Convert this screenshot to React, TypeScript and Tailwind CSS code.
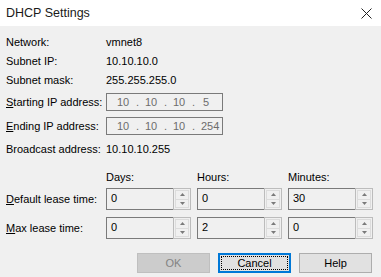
import React from "react";

function Row({ label, children }: { label: React.ReactNode; children: React.ReactNode }) {
  return (
    <div className="flex h-[19px] items-center">
      <div className="w-[100px] whitespace-nowrap">{label}</div>
      <div>{children}</div>
    </div>
  );
}

function IpBox({ parts }: { parts: string[] }) {
  return (
    <div className="flex h-[18px] w-[117px] items-center border border-[#7a7a7a] bg-[#f0f0f0] pl-[10px] text-[#6d6d6d]">
      <span className="w-[19px]">{parts[0]}</span>
      <span className="w-[9px]">.</span>
      <span className="w-[19px]">{parts[1]}</span>
      <span className="w-[9px]">.</span>
      <span className="w-[19px]">{parts[2]}</span>
      <span className="w-[9px]">{parts[3].length > 1 ? "." : ". "}</span>
      <span className={parts[3].length > 1 ? "" : "pl-[2px]"}>{parts[3]}</span>
    </div>
  );
}

function Spin({ value }: { value: string }) {
  return (
    <div className="flex h-[22px] w-[85px]">
      <div className="flex flex-1 items-center border border-r-0 border-[#7a7a7a] bg-[#f0f0f0] pl-[4px] pb-[2px]">
        {value}
      </div>
      <div className="flex w-[18px] flex-col border border-[#bcbcbc] bg-[#f0f0f0] p-px">
        <div className="flex flex-1 items-center justify-center border border-[#dcdcdc]">
          <svg width="5" height="3" viewBox="0 0 5 3">
            <path d="M2.5 0 L5 3 L0 3 Z" fill="#7a7a7a" />
          </svg>
        </div>
        <div className="flex flex-1 items-center justify-center border border-t-0 border-[#dcdcdc]">
          <svg width="5" height="3" viewBox="0 0 5 3">
            <path d="M0 0 L5 0 L2.5 3 Z" fill="#7a7a7a" />
          </svg>
        </div>
      </div>
    </div>
  );
}

export default function App() {
  return (
    <div
      className="h-[277px] w-[381px] overflow-hidden bg-[#f0f0f0] text-[11px] text-black"
      style={{ fontFamily: '"Liberation Sans", Arial, sans-serif' }}
    >
      <div className="flex h-[26px] items-center justify-between bg-white pl-[6px] pr-[9px]">
        <span className="text-[12.5px] text-[#1a1a1a]">DHCP Settings</span>
        <svg width="11" height="11" viewBox="0 0 11 11">
          <path d="M0.5 0.5 L10.5 10.5 M10.5 0.5 L0.5 10.5" stroke="#222" strokeWidth="1" />
        </svg>
      </div>

      <div className="pl-[6px] pt-[7px]">
        <Row label="Network:">vmnet8</Row>
        <Row label="Subnet IP:">10.10.10.0</Row>
        <Row label="Subnet mask:">255.255.255.0</Row>

        <div className="flex h-[24px] items-center">
          <div className="w-[100px] whitespace-nowrap">
            <span className="underline">S</span>tarting IP address:
          </div>
          <IpBox parts={["10", "10", "10", "5"]} />
        </div>
        <div className="flex h-[24px] items-center">
          <div className="w-[100px] whitespace-nowrap">
            <span className="underline">E</span>nding IP address:
          </div>
          <IpBox parts={["10", "10", "10", "254"]} />
        </div>
        <div className="flex h-[22px] items-center">
          <div className="w-[100px] whitespace-nowrap">Broadcast address:</div>
          <div>10.10.10.255</div>
        </div>

        <div className="mt-[8px] flex h-[18px] items-center">
          <div className="w-[100px]" />
          <div className="flex gap-[6px]">
            <div className="w-[85px]">Days:</div>
            <div className="w-[85px]">Hours:</div>
            <div className="w-[85px]">Minutes:</div>
          </div>
        </div>

        <div className="mt-[2px] flex items-center">
          <div className="w-[100px] whitespace-nowrap">
            <span className="underline">D</span>efault lease time:
          </div>
          <div className="flex gap-[6px]">
            <Spin value="0" />
            <Spin value="0" />
            <Spin value="30" />
          </div>
        </div>
        <div className="mt-[7px] flex items-center">
          <div className="w-[100px] whitespace-nowrap">
            <span className="underline">M</span>ax lease time:
          </div>
          <div className="flex gap-[6px]">
            <Spin value="0" />
            <Spin value="2" />
            <Spin value="0" />
          </div>
        </div>

        <div className="mt-[14px] flex justify-end gap-[8px] pr-[9px]">
          <button className="flex h-[20px] w-[73px] items-center justify-center border border-[#bfbfbf] bg-[#cccccc] text-[#838383]">
            OK
          </button>
          <button className="h-[20px] w-[73px] border-2 border-[#0078d7] bg-[#e1e1e1] p-px">
            <div className="flex h-full w-full items-center justify-center border border-dotted border-black">
              Cancel
            </div>
          </button>
          <button className="flex h-[20px] w-[73px] items-center justify-center border border-[#adadad] bg-[#e1e1e1]">
            Help
          </button>
        </div>
      </div>
    </div>
  );
}
